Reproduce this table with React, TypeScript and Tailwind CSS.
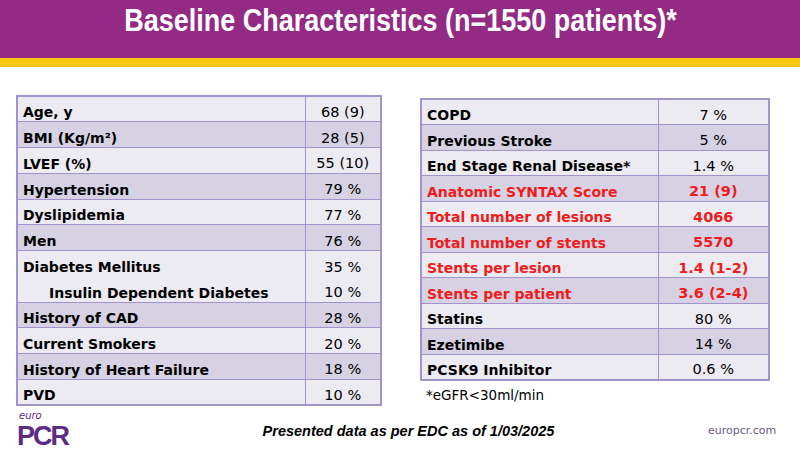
import React from "react"

type Row = { label: string; value: string; dark?: boolean; red?: boolean; indent?: boolean; joinNext?: boolean; joinPrev?: boolean }

const leftRows: Row[] = [
  { label: "Age, y", value: "68 (9)" },
  { label: "BMI (Kg/m²)", value: "28 (5)", dark: true },
  { label: "LVEF (%)", value: "55 (10)" },
  { label: "Hypertension", value: "79 %", dark: true },
  { label: "Dyslipidemia", value: "77 %" },
  { label: "Men", value: "76 %", dark: true },
  { label: "Diabetes Mellitus", value: "35 %", joinNext: true },
  { label: "Insulin Dependent Diabetes", value: "10 %", indent: true, joinPrev: true },
  { label: "History of CAD", value: "28 %", dark: true },
  { label: "Current Smokers", value: "20 %" },
  { label: "History of Heart Failure", value: "18 %", dark: true },
  { label: "PVD", value: "10 %" },
]

const rightRows: Row[] = [
  { label: "COPD", value: "7 %" },
  { label: "Previous Stroke", value: "5 %", dark: true },
  { label: "End Stage Renal Disease*", value: "1.4 %" },
  { label: "Anatomic SYNTAX Score", value: "21 (9)", dark: true, red: true },
  { label: "Total number of lesions", value: "4066", red: true },
  { label: "Total number of stents", value: "5570", dark: true, red: true },
  { label: "Stents per lesion", value: "1.4 (1-2)", red: true },
  { label: "Stents per patient", value: "3.6 (2-4)", dark: true, red: true },
  { label: "Statins", value: "80 %" },
  { label: "Ezetimibe", value: "14 %", dark: true },
  { label: "PCSK9 Inhibitor", value: "0.6 %" },
]

function DataTable({ rows, labelW, valueW, rowH }: { rows: Row[]; labelW: string; valueW: string; rowH: string }) {
  return (
    <table className="border-collapse border-2 border-[#a393cc] font-['DejaVu_Sans',sans-serif] leading-none">
      <tbody>
        {rows.map((r) => {
          const bg = r.dark ? "bg-[#d6d2e3]" : "bg-[#edebf2]"
          const edges = r.joinNext ? "border-b-0" : r.joinPrev ? "border-t-0" : ""
          const color = r.red ? "text-[#ee1c1c]" : "text-black"
          return (
            <tr key={r.label} className={`${bg} ${rowH}`}>
              <td className={`${labelW} border border-[#a393cc] ${edges} align-bottom pb-[2px] text-[14px] font-bold ${color} ${r.indent ? "pl-[31px]" : "pl-[5px]"}`}>
                {r.label}
              </td>
              <td className={`${valueW} border border-[#a393cc] ${edges} align-bottom pb-[2px] text-[14.5px] text-center ${r.red ? "font-bold" : ""} ${color}`}>
                {r.value}
              </td>
            </tr>
          )
        })}
      </tbody>
    </table>
  )
}

export default function App() {
  return (
    <div className="w-[800px] h-[450px] bg-white flex flex-col overflow-hidden">
      <div className="h-[58px] bg-[#932a84] flex justify-center pt-[5px]">
        <h1 className="text-white font-bold text-[31px] leading-[32px] font-['Liberation_Sans',sans-serif] scale-x-[0.87] whitespace-nowrap">
          Baseline Characteristics (n=1550 patients)*
        </h1>
      </div>
      <div className="h-[9px] bg-[#f6c612]" />

      <div className="flex items-start pl-[16px] pt-[28px] gap-[38px] h-[340px]">
        <DataTable rows={leftRows} labelW="w-[288px]" valueW="w-[76px]" rowH="h-[25.75px]" />
        <div className="flex flex-col mt-[3px]">
          <DataTable rows={rightRows} labelW="w-[237px]" valueW="w-[111px]" rowH="h-[25.5px]" />
          <p className="pl-[6px] pt-[4px] text-[13.5px] text-black font-['DejaVu_Sans',sans-serif]">*eGFR&lt;30ml/min</p>
        </div>
      </div>

      <div className="flex items-end justify-between pl-[17px] pr-[28px] mt-auto pb-[1px]">
        <div className="flex flex-col gap-[2px] text-[#5b2b86] w-[120px]">
          <span className="italic text-[10px] leading-[10px] pl-[2px] font-['DejaVu_Sans',sans-serif]">euro</span>
          <span className="font-bold text-[27px] leading-[26px] tracking-[-2px] font-['Liberation_Sans',sans-serif]">PCR</span>
        </div>
        <p className="font-bold italic text-[14.5px] leading-[18px] text-black font-['Liberation_Sans',sans-serif] pb-[9px] -ml-[28px]">
          Presented data as per EDC as of 1/03/2025
        </p>
        <p className="text-[11px] leading-[14px] text-[#6b5a88] font-['DejaVu_Sans',sans-serif] pb-[11px] w-[64px] text-right whitespace-nowrap">europcr.com</p>
      </div>
    </div>
  )
}
